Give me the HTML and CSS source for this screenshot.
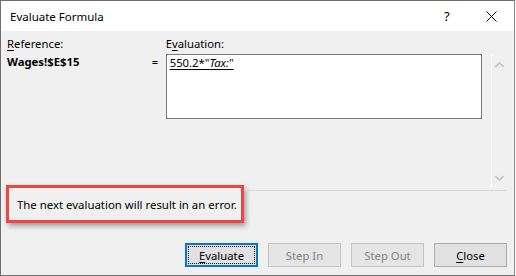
FILE: index.html
```html
<!DOCTYPE html>
<html lang="en">
<head>
  <meta charset="UTF-8" />
  <title>Evaluate Formula</title>
  <link rel="stylesheet" href="styles.css">
</head>
<body>
  <div class="dialog">
    <div class="titlebar">
      <span class="title">Evaluate Formula</span>
      <span class="help">?</span>
      <span class="close-x">
        <svg width="11" height="11" viewBox="0 0 11 11"><path d="M0.5 0.5 L10.5 10.5 M10.5 0.5 L0.5 10.5" stroke="#000" stroke-width="1" fill="none"/></svg>
      </span>
    </div>

    <div class="content">
      <div class="eval-row">
        <div class="ref-col">
          <div class="label"><u>R</u>eference:</div>
          <div class="ref-value">Wages!$E$15</div>
        </div>
        <div class="equals">=</div>
        <div class="eval-col">
          <div class="label">E<u>v</u>aluation:</div>
          <div class="eval-box"><span class="expr">550.2*"<i>Tax:</i>"</span></div>
        </div>
        <div class="scrollbar">
          <svg width="9" height="6" viewBox="0 0 9 6"><path d="M0.5 5 L4.5 1 L8.5 5" stroke="#c2c2c2" stroke-width="1.6" fill="none"/></svg>
          <svg width="9" height="6" viewBox="0 0 9 6"><path d="M0.5 1 L4.5 5 L8.5 1" stroke="#c2c2c2" stroke-width="1.6" fill="none"/></svg>
        </div>
      </div>

      <div class="message-row">
        <div class="message">The next evaluation will result in an error.</div>
        <div class="rule"></div>
      </div>

      <div class="buttons">
        <button class="btn default"><span class="focus"><u>E</u>valuate</span></button>
        <button class="btn" disabled>Step In</button>
        <button class="btn" disabled>Step Out</button>
        <button class="btn"><u>C</u>lose</button>
      </div>
    </div>
  </div>
</body>
</html>
```

FILE: styles.css
```css
body { margin: 0; background: #fff; font-family: "Noto Sans", "Open Sans", sans-serif; font-size: 11.3px; color: #000; }

.dialog { width: 513px; height: 274px; border: 1px solid #6d6d6d; border-right-color: #8a8a8a; background: #f0f0f0; display: flex; flex-direction: column; }

.titlebar { height: 30px; background: #fff; display: flex; align-items: center; padding-left: 9px; }
.title { flex: 1; font-size: 11.5px; }
.help { width: 8px; margin-right: 34px; font-size: 13px; }
.close-x { width: 11px; height: 11px; margin-right: 17px; display: flex; }

.content { flex: 1; display: flex; flex-direction: column; padding: 0 7px 0 6px; }

.eval-row { display: flex; height: 156px; }
.label { line-height: 16px; margin-top: 5px; }
.label u, .btn u { text-decoration-thickness: 1px; text-underline-offset: 2px; }
.ref-col { width: 145px; }
.ref-value { font-weight: bold; line-height: 16px; margin-top: 2px; }
.equals { width: 14px; margin-top: 23px; line-height: 16px; }
.eval-col { width: 317px; }
.eval-box { margin-top: 2px; height: 63px; background: #fff; border: 1px solid #7a7a7a; padding: 0 3px; line-height: 16px; }
.expr { text-decoration: underline; text-underline-offset: 2px; }
.scrollbar { margin: 23px 0 0 9px; width: 16px; height: 133px; border-left: 1px solid #fff; display: flex; flex-direction: column; justify-content: space-between; align-items: center; padding: 8px 0 6px; box-sizing: border-box; }

.message-row { display: flex; align-items: flex-start; margin-top: -2px; }
.message { width: 224px; height: 32px; border: 3px solid #f04545; box-shadow: 2px 3px 5px rgba(0, 0, 0, 0.35); display: flex; align-items: center; padding-left: 8px; margin-left: -1px; flex-shrink: 0; white-space: nowrap; font-size: 11.4px; }
.rule { flex: 1; height: 1px; background: #d9d9d9; margin-top: 5px; margin-right: 1px; }

.buttons { display: flex; justify-content: flex-end; gap: 10px; margin-top: 20px; }
.btn { width: 73px; height: 24px; font: inherit; background: #e1e1e1; border: 1px solid #adadad; padding: 0; color: #000; display: flex; align-items: center; justify-content: center; }
.btn:disabled { color: #838383; background: #e5e5e5; border-color: #c4c4c4; }
.btn.default { border: 2px solid #0078d7; }
.focus { width: 65px; height: 16px; border: 1px dotted #000; display: flex; align-items: center; justify-content: center; }
```
